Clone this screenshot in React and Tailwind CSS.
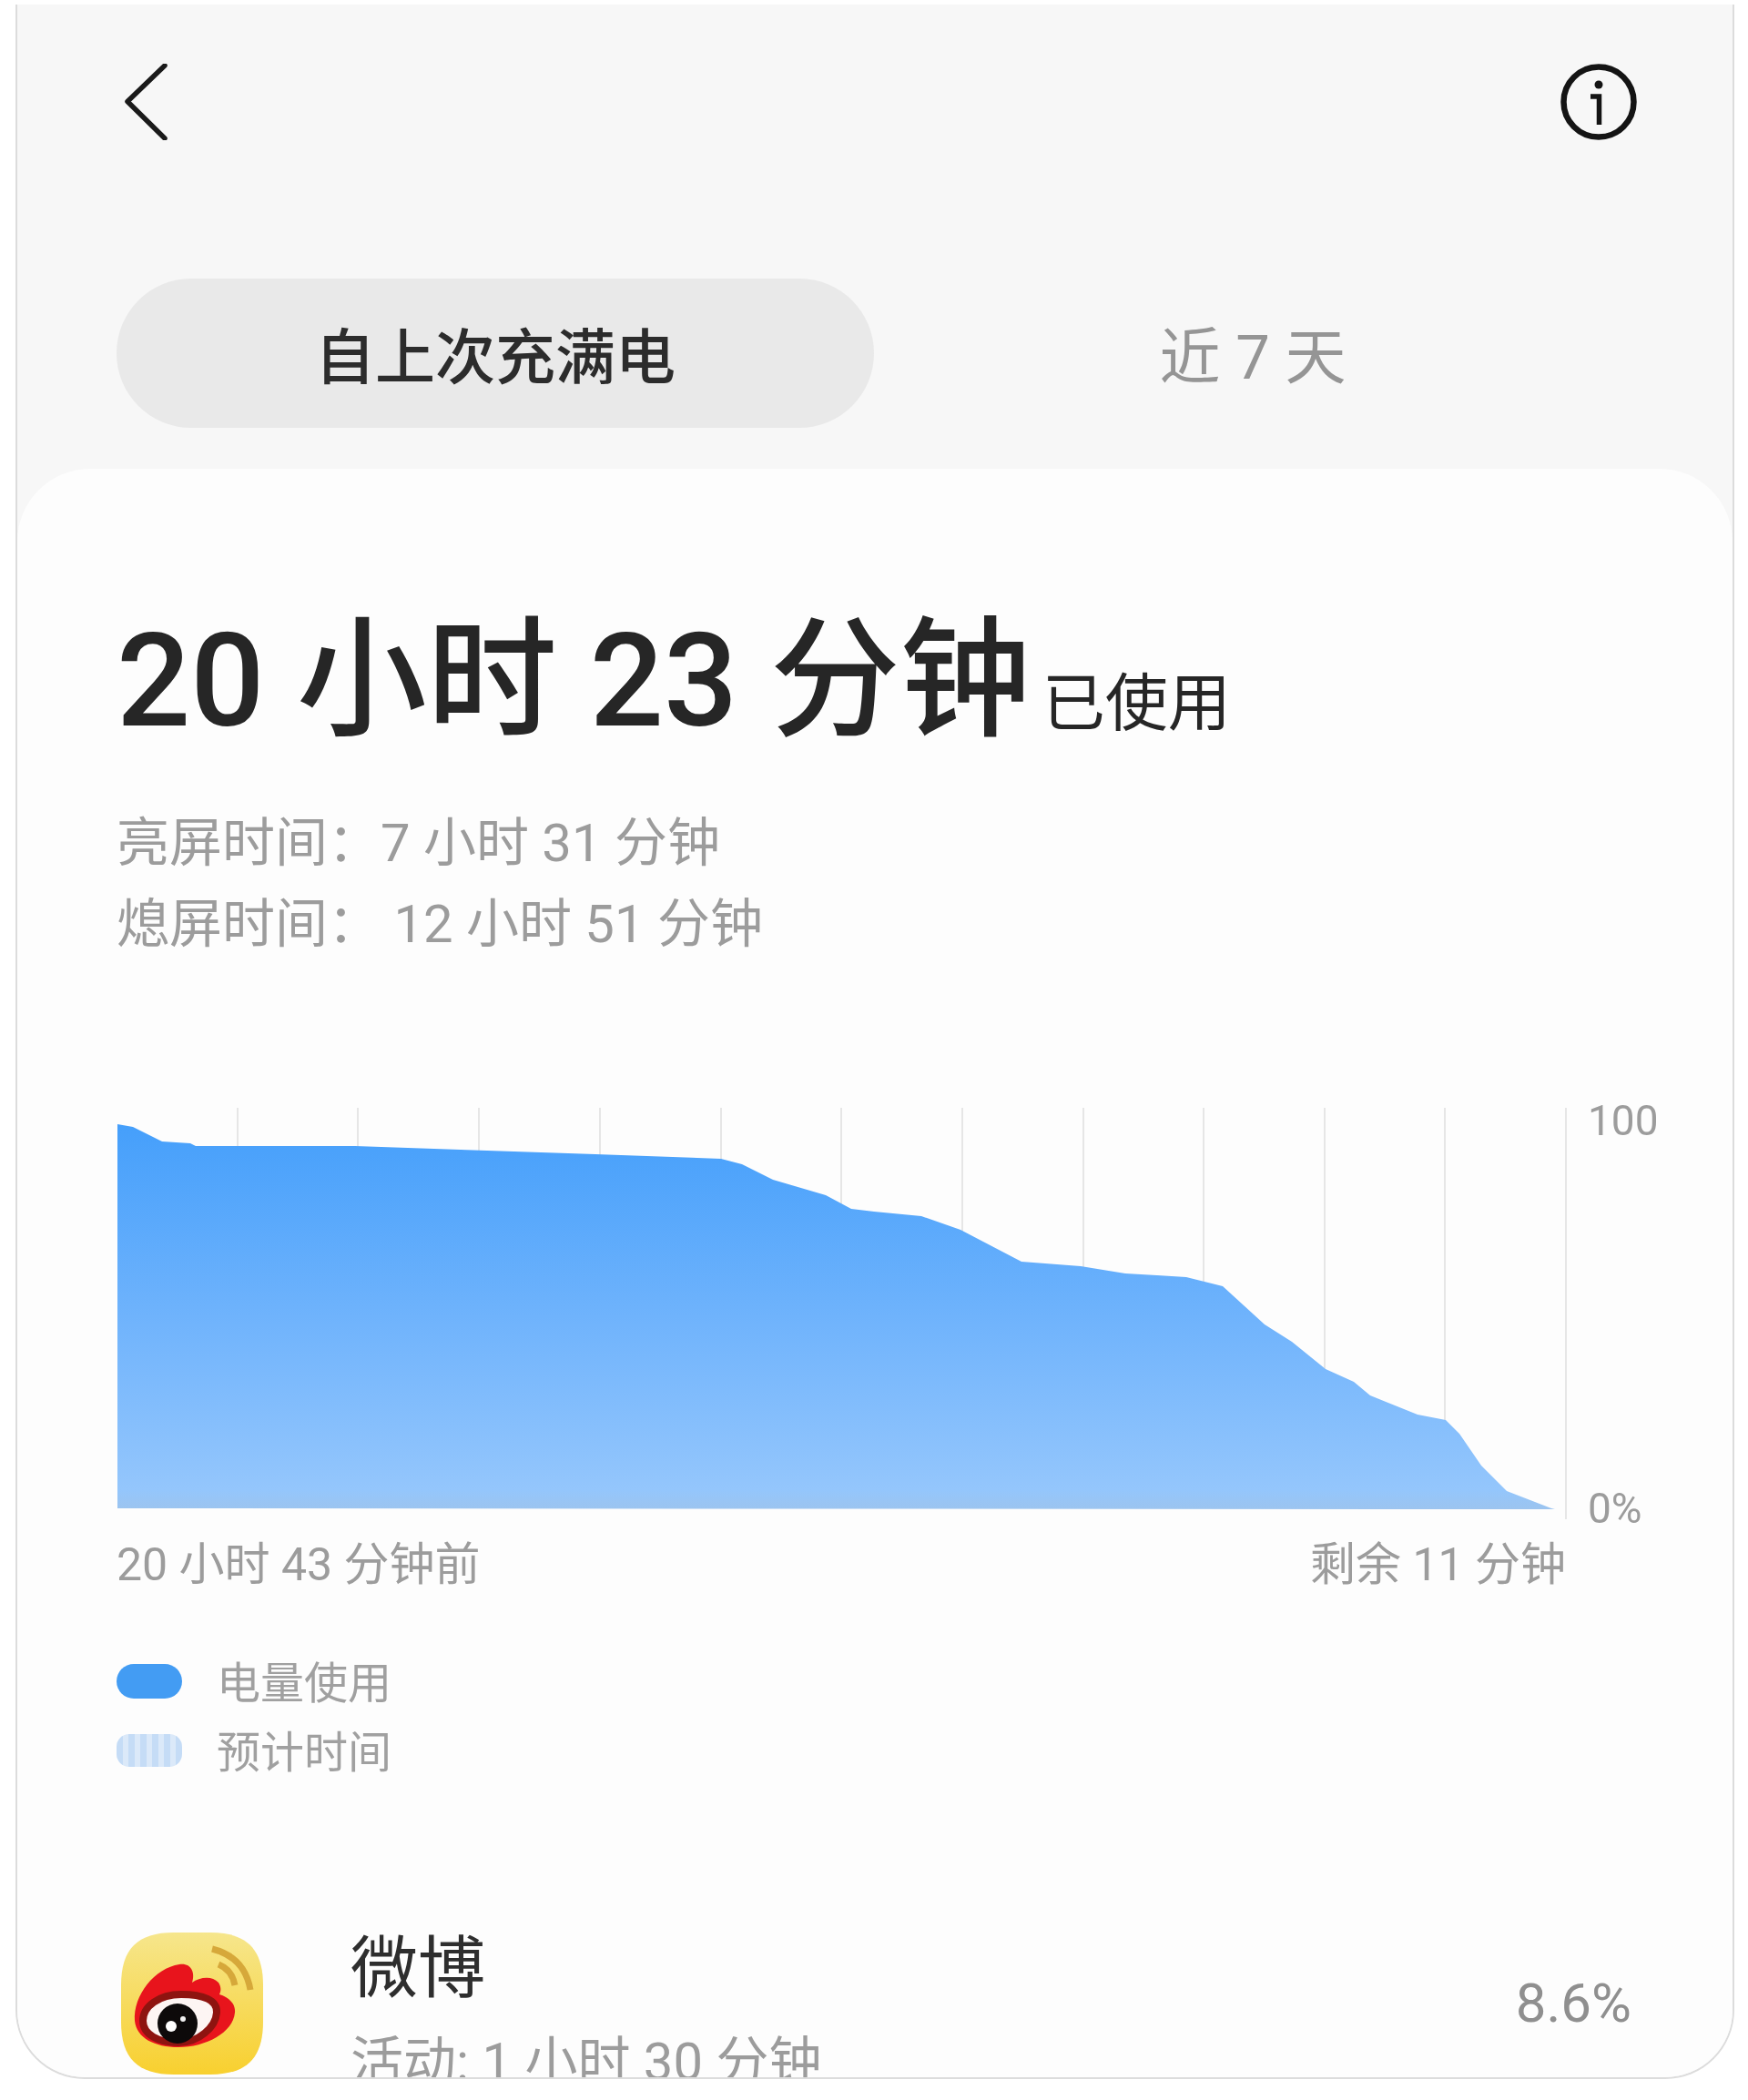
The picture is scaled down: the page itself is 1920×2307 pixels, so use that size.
const FONT = 'font-[Roboto,"Noto_Sans_CJK_SC",sans-serif]'

// traced from the reference, in page coordinates
const LINE = [
  [129, 1234], [146, 1237], [178, 1253], [209, 1255], [215, 1258], [390, 1258], [654, 1267], [792, 1272],
  [815, 1278], [849, 1295], [907, 1312], [935, 1327], [960, 1330], [1012, 1335], [1055, 1350], [1122, 1385],
  [1187, 1390], [1236, 1398], [1303, 1402], [1343, 1412], [1389, 1454], [1419, 1473], [1456, 1503], [1487, 1517],
  [1505, 1532], [1557, 1553], [1588, 1559], [1603, 1574], [1627, 1609], [1655, 1637], [1704, 1656],
]
const GRID = [261, 393, 526, 659, 792, 924, 1057, 1190, 1322, 1455, 1587, 1720]

function BackIcon() {
  return (
    <svg viewBox="0 0 48 84" className="w-[48px] h-[84px]">
      <path d="M44 2 3 41.5 44 82" fill="none" stroke="#1a1a1a" strokeWidth="5.5" strokeLinecap="round" strokeLinejoin="round" />
    </svg>
  )
}

function InfoIcon() {
  return (
    <svg viewBox="0 0 84 84" className="w-[84px] h-[84px]">
      <circle cx="42" cy="42" r="38.5" fill="none" stroke="#141414" strokeWidth="6.5" />
      <circle cx="42" cy="23" r="4.5" fill="#141414" />
      <path d="M33 36h9.500v31" fill="none" stroke="#141414" strokeWidth="5.5" />
    </svg>
  )
}

function Chart() {
  const pts = LINE.map((p) => p.join(',')).join(' ')
  return (
    <svg viewBox="128 1210 1594 460" className="w-[1594px] h-[460px] shrink-0">
      <defs>
        <linearGradient id="fill" x1="0" y1="0" x2="0" y2="1">
          <stop offset="0" stopColor="#459ffb" />
          <stop offset="0.5" stopColor="#6fb3fc" />
          <stop offset="0.95" stopColor="#94c6fc" />
          <stop offset="1" stopColor="#9cc4ef" />
        </linearGradient>
      </defs>
      {GRID.map((x) => (
        <line key={x} x1={x} x2={x} y1="1216" y2={x === 1720 ? 1668 : 1640} stroke="#e6e6e6" strokeWidth="2" />
      ))}
      <polygon points={`129,1656 ${pts} 1708,1657`} fill="url(#fill)" />
    </svg>
  )
}

function WeiboIcon() {
  return (
    <svg viewBox="0 0 156 156" className="w-[156px] h-[156px] shrink-0">
      <defs>
        <linearGradient id="wb" x1="0" y1="0" x2="0" y2="1">
          <stop offset="0" stopColor="#f6e68c" />
          <stop offset="1" stopColor="#f8d02f" />
        </linearGradient>
      </defs>
      <path d="M58 0h40c40 0 58 18 58 58v40c0 40-18 58-58 58H58C18 156 0 138 0 98V58C0 18 18 0 58 0Z" fill="url(#wb)" />
      <path d="M100 18c24 6 38 22 42 45M107 35c10 4 16 12 18 23" fill="none" stroke="#d6a83a" strokeWidth="7" />
      <path d="M15 97c-2-28 22-58 49-62 12-2 18 8 14 20 8-6 22-8 29 0 3 5 3 9 1 13 10 3 18 10 17 20-2 22-32 38-62 38-26 0-46-10-48-29Z" fill="#e8141c" />
      <path d="M24 97c0-16 18-29 42-29s40 6 39 20c-1 16-20 33-42 33-22 0-39-9-39-24Z" fill="#fdf5f3" stroke="#8e1410" strokeWidth="8" />
      <circle cx="62" cy="100" r="22" fill="#0d0a0a" />
      <circle cx="55" cy="103" r="6" fill="#fff" />
      <circle cx="68" cy="95" r="3" fill="#f1f1f1" />
    </svg>
  )
}

export default function App() {
  return (
    <div className={`w-[1920px] h-[2307px] bg-white pl-[17px] pt-[5px] ${FONT}`}>
      <div className="w-[1888px] h-[2279px] flex flex-col overflow-hidden rounded-b-[76px] border-x-2 border-b-2 border-[#dcdcdc] bg-[#f7f7f7] blur-[0.7px]">
        {/* top bar */}
        <div className="flex items-center justify-between pl-[118px] pr-[105px] pt-[65px]">
          <BackIcon />
          <InfoIcon />
        </div>

        {/* tabs */}
        <div className="flex mt-[152px] ml-[109px] mr-[111px]">
          <div className="flex-1 h-[164px] pt-[11px] rounded-full bg-[#e9e9e9] flex items-center justify-center text-[66px] font-medium text-[#2c2c2c]">
            自上次充满电
          </div>
          <div className="flex-1 h-[164px] pt-[11px] flex items-center justify-center text-[67px] text-[#959595]">
            近 7 天
          </div>
        </div>

        {/* card */}
        <div className="flex-1 min-h-0 mt-[45px] overflow-hidden rounded-t-[80px] bg-[#fdfdfd] pl-[109px] pr-[111px] pt-[158px]">
          <div className="flex items-baseline h-[150px] leading-[150px] text-[#262626] whitespace-nowrap">
            <span className="text-[143px] font-medium">20 小时 23 分钟</span>
            <span className="text-[69px] ml-[13px]">已使用</span>
          </div>

          <div className="mt-[59px] text-[58px] leading-[89px] text-[#9c9c9c] whitespace-nowrap">
            <div>亮屏时间：7 小时 31 分钟</div>
            <div>熄屏时间： 12 小时 51 分钟</div>
          </div>

          <div className="flex items-start mt-[151px] h-[466px] whitespace-nowrap">
            <Chart />
            <div className="ml-[22px] h-full flex flex-col justify-between text-[46px] leading-[40px] text-[#9c9c9c]">
              <span>100</span>
              <span>0%</span>
            </div>
          </div>

          <div className="flex justify-between w-[1592px] mt-[12px] text-[50px] leading-[60px] text-[#9c9c9c]">
            <span>20 小时 43 分钟前</span>
            <span>剩余 11 分钟</span>
          </div>

          <div className="mt-[71px] flex flex-col gap-[16px] text-[48px] leading-[60px] text-[#a0a0a0]">
            <div className="flex items-center gap-[38px]">
              <div className="w-[72px] h-[38px] -mt-[6px] rounded-full bg-[#439cf3]"></div>
              <span>电量使用</span>
            </div>
            <div className="flex items-center gap-[38px]">
              <div className="w-[72px] h-[36px] -mt-[6px] rounded-[14px] bg-[repeating-linear-gradient(90deg,#c5dcf6_0,#c5dcf6_7px,#dbe9f9_7px,#dbe9f9_13px)]"></div>
              <span>预计时间</span>
            </div>
          </div>

          {/* first app row, cut off by the phone edge */}
          <div className="flex items-start mt-[167px] ml-[5px]">
            <WeiboIcon />
            <div className="ml-[96px] flex-1 whitespace-nowrap">
              <div className="text-[74px] leading-[80px] text-[#2e2e2e]">微博</div>
              <div className="mt-[32px] text-[58px] leading-[60px] text-[#9c9c9c]">活动: 1 小时 30 分钟</div>
            </div>
            <div className="self-start mt-[48px] text-[60px] leading-[60px] text-[#8f8f8f]">8.6%</div>
          </div>
        </div>
      </div>
    </div>
  )
}
